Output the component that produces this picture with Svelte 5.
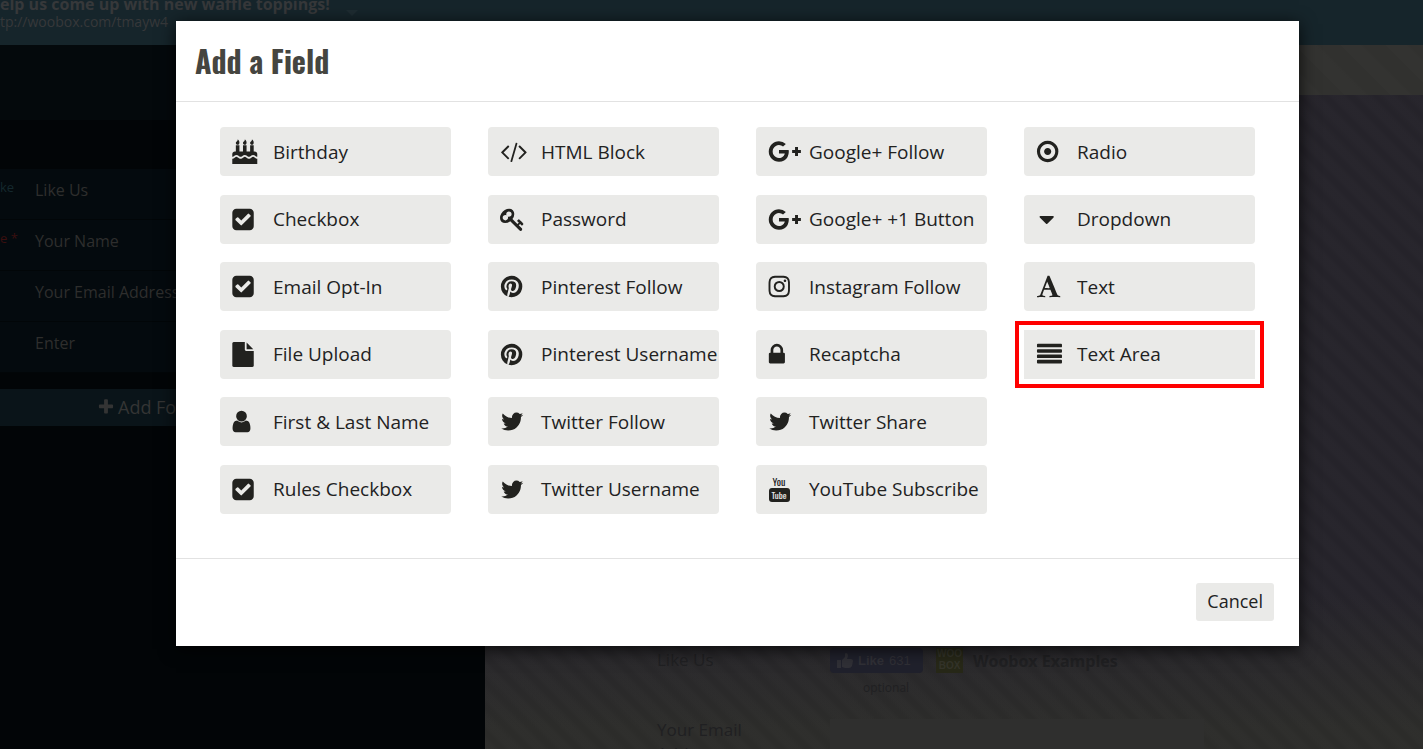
<script lang="ts">
	const icons: Record<string, { x: number; d: string }> = {
		cake: {
			x: -20,
			d: "M1792 1408v384h-1792v-384q45 0 85-14t59-27.5 47-37.5q30-27 51.5-38t56.5-11q24 0 44 7t31 15 33 27q29 25 47 38t58 27 86 14q45 0 85-14.5t58-27 48-37.5q21-19 32.5-27t31-15 43.5-7q35 0 56.5 11t51.5 38q28 24 47 37.5t59 27.5 85 14 85-14 59-27.5 47-37.5q30-27 51.5-38t56.5-11q34 0 55.5 11t51.5 38q28 24 47 37.5t59 27.5 85 14zm0-320v192q-24 0-44-7t-31-15-33-27q-29-25-47-38t-58-27-85-14q-46 0-86 14t-58 27-47 38q-22 19-33 27t-31 15-44 7q-35 0-56.5-11t-51.5-38q-29-25-47-38t-58-27-86-14q-45 0-85 14.5t-58 27-48 37.5q-21 19-32.5 27t-31 15-43.5 7q-35 0-56.5-11t-51.5-38q-28-24-47-37.5t-59-27.5-85-14q-46 0-86 14t-58 27-47 38q-22 19-33 27t-31 15-44 7v-192q0-80 56-136t136-56h64v-448h256v448h256v-448h256v448h256v-448h256v448h64q80 0 136 56t56 136zM512 256q0 77-36 118.5t-92 41.5q-53 0-90.5-37.5t-37.5-90.5q0-29 9.5-51t23.5-34 31-28 31-31.5 23.5-44.5 9.5-67q38 0 83 74t45 150zm512 0q0 77-36 118.5t-92 41.5q-53 0-90.5-37.5t-37.5-90.5q0-29 9.5-51t23.5-34 31-28 31-31.5 23.5-44.5 9.5-67q38 0 83 74t45 150zm512 0q0 77-36 118.5t-92 41.5q-53 0-90.5-37.5t-37.5-90.5q0-29 9.5-51t23.5-34 31-28 31-31.5 23.5-44.5 9.5-67q38 0 83 74t45 150z",
		},
		check: {
			x: 105,
			d: "M813 1299l614-614q19-19 19-45t-19-45l-102-102q-19-19-45-19t-45 19l-467 467-211-211q-19-19-45-19t-45 19l-102 102q-19 19-19 45t19 45l358 358q19 19 45 19t45-19zm851-883v960q0 119-84.5 203.5t-203.5 84.5h-960q-119 0-203.5-84.5t-84.5-203.5v-960q0-119 84.5-203.5t203.5-84.5h960q119 0 203.5 84.5t84.5 203.5z",
		},
		file: {
			x: 105,
			d: "M1152 512v-472q22 14 36 28l408 408q14 14 28 36h-472zm-128 32q0 40 28 68t68 28h544v1056q0 40-28 68t-68 28h-1344q-40 0-68-28t-28-68v-1600q0-40 28-68t68-28h800v544z",
		},
		user: {
			x: 215,
			d: "M1536 1399q0 109-62.5 187t-150.5 78h-854q-88 0-150.5-78t-62.5-187q0-85 8.5-160.5t31.5-152 58.5-131 94-89 134.5-34.5q131 128 313 128t313-128q76 0 134.5 34.5t94 89 58.5 131 31.5 152 8.5 160.5zm-256-887q0 159-112.5 271.5t-271.5 112.5-271.5-112.5-112.5-271.5 112.5-271.5 271.5-112.5 271.5 112.5 112.5 271.5z",
		},
		code: {
			x: -100,
			d: "M553 1399l-50 50q-10 10-23 10t-23-10l-466-466q-10-10-10-23t10-23l466-466q10-10 23-10t23 10l50 50q10 10 10 23t-10 23l-393 393 393 393q10 10 10 23t-10 23zm591-1067l-373 1291q-4 13-15.5 19.5t-23.5 2.5l-62-17q-13-4-19.5-15.5t-2.5-24.5l373-1291q4-13 15.5-19.5t23.5-2.5l62 17q13 4 19.5 15.5t2.5 24.5zm657 651l-466 466q-10 10-23 10t-23-10l-50-50q-10-10-10-23t10-23l393-393-393-393q-10-10-10-23t10-23l50-50q10-10 23-10t23 10l466 466q10 10 10 23t-10 23z",
		},
		key: {
			x: 0,
			d: "M832 512q0-80-56-136t-136-56-136 56-56 136q0 42 19 83-41-19-83-19-80 0-136 56t-56 136 56 136 136 56 136-56 56-136q0-42-19-83 41 19 83 19 80 0 136-56t56-136zm851 704q0 17-49 66t-66 49q-9 0-28.5-16t-36.5-33-38.5-40-24.5-26l-96 96 220 220q28 28 28 68 0 42-39 81t-81 39q-40 0-68-28l-671-671q-176 131-365 131-163 0-265.5-102.5t-102.5-265.5q0-160 95-313t248-248 313-95q163 0 265.5 102.5t102.5 265.5q0 189-131 365l355 355 96-96q-3-3-26-24.5t-40-38.5-33-36.5-16-28.5q0-17 49-66t66-49q13 0 23 10 6 6 46 44.5t82 79.5 86.5 86 73 78 28.5 41z",
		},
		pinterest: {
			x: 65,
			d: "M1664 896q0 209-103 385.5t-279.5 279.5-385.5 103q-111 0-218-32 59-93 78-164 9-34 54-211 20 39 73 67.5t114 28.5q121 0 216-68.5t147-188.5 52-270q0-114-59.5-214t-172.5-163-255-63q-105 0-196 29t-154.5 77-109 110.5-67 129.5-21.5 134q0 104 40 183t117 111q30 12 38-20 2-7 8-31t8-30q6-23-11-43-51-61-51-151 0-151 104.5-259.5t273.5-108.5q151 0 235.5 82t84.5 213q0 170-68.5 289t-175.5 119q-61 0-98-43.5t-23-104.5q8-35 26.5-93.5t30-103 11.5-75.5q0-50-27-83t-77-33q-62 0-105 57t-43 142q0 73 25 122l-99 418q-17 70-13 177-206-91-333-281t-127-423q0-209 103-385.5t279.5-279.5 385.5-103 385.5 103 279.5 279.5 103 385.5z",
		},
		twitter: {
			x: 20,
			d: "M1684 408q-67 98-162 167 1 14 1 42 0 130-38 259.5t-115.5 248.5-184.5 210.5-258 146-323 54.5q-271 0-496-145 35 4 78 4 225 0 401-138-105-2-188-64.5t-114-159.5q33 5 61 5 43 0 85-11-112-23-185.5-111.5t-73.5-205.5v-4q68 38 146 41-66-44-105-115t-39-154q0-88 44-163 121 149 294.5 238.5t371.5 99.5q-8-38-8-74 0-134 94.5-228.5t228.5-94.5q140 0 236 102 109-21 205-78-37 115-142 178 93-10 186-50z",
		},
		google: {
			x: -310,
			d: "M1181 913q0 208-87 370.5t-248 254-369 91.5q-149 0-285-58t-234-156-156-234-58-285 58-285 156-234 234-156 285-58q286 0 491 192l-199 191q-117-113-292-113-123 0-227.5 62t-165.5 168.5-61 232.5 61 232.5 165.5 168.5 227.5 62q83 0 152.5-23t114.5-57.5 78.5-78.5 49-83 21.5-74h-416v-252h692q12 63 12 122zm867-122v210h-209v209h-210v-209h-209v-210h209v-209h210v209h209z",
		},
		instagram: {
			x: 90,
			d: "M1152 896q0-106-75-181t-181-75-181 75-75 181 75 181 181 75 181-75 75-181zm138 0q0 164-115 279t-279 115-279-115-115-279 115-279 279-115 279 115 115 279zm108-410q0 38-27 65t-65 27-65-27-27-65 27-65 65-27 65 27 27 65zm-502-220q-7 0-76.5-.5t-105.5 0-96.5 3-103 10-71.5 18.5q-50 20-88 58t-58 88q-11 29-18.5 71.5t-10 103-3 96.5 0 105.5.5 76.5-.5 76.5 0 105.5 3 96.5 10 103 18.5 71.5q20 50 58 88t88 58q29 11 71.5 18.5t103 10 96.5 3 105.5 0 76.5-.5 76.5.5 105.5 0 96.5-3 103-10 71.5-18.5q50-20 88-58t58-88q11-29 18.5-71.5t10-103 3-96.5 0-105.5-.5-76.5.5-76.5 0-105.5-3-96.5-10-103-18.5-71.5q-20-50-58-88t-88-58q-29-11-71.5-18.5t-103-10-96.5-3-105.5 0-76.5.5zm768 630q0 229-5 317-10 208-124 322t-322 124q-88 5-317 5t-317-5q-208-10-322-124t-124-322q-5-88-5-317t5-317q10-208 124-322t322-124q88-5 317-5t317 5q208 10 322 124t124 322q5 88 5 317z",
		},
		lock: {
			x: 260,
			d: "M640 768h512v-192q0-106-75-181t-181-75-181 75-75 181v192zm832 96v576q0 40-28 68t-68 28h-960q-40 0-68-28t-28-68v-576q0-40 28-68t68-28h32v-192q0-184 132-316t316-132 316 132 132 316v192h32q40 0 68 28t28 68z",
		},
		radio: {
			x: 60,
			d: "M1152 896q0 106-75 181t-181 75-181-75-75-181 75-181 181-75 181 75 75 181zm-256-544q-148 0-273 73t-198 198-73 273 73 273 198 198 273 73 273-73 198-198 73-273-73-273-198-198-273-73zm768 544q0 209-103 385.5t-279.5 279.5-385.5 103-385.5-103-279.5-279.5-103-385.5 103-385.5 279.5-279.5 385.5-103 385.5 103 279.5 279.5 103 385.5z",
		},
		caret: {
			x: 130,
			d: "M1408 704q0 26-19 45l-448 448q-19 19-45 19t-45-19l-448-448q-19-19-19-45t19-45 45-19h896q26 0 45 19t19 45z",
		},
		font: {
			x: -10,
			d: "M789 559l-170 450q33 0 136.5 2t160.5 2q19 0 57-2-87-253-184-452zm-725 1105l2-79q23-7 56-12.5t57-10.5 49.5-14.5 44.5-29 31-50.5l237-616 280-724h128q8 14 11 21l205 480q33 78 106 257.5t114 274.5q15 34 58 144.5t72 168.5q20 45 35 57 19 15 88 29.5t84 20.5q6 38 6 57 0 5-.5 13.5t-.5 12.5q-63 0-190-8t-191-8q-76 0-215 7t-178 8q0-43 4-78l131-28q1 0 12.5-2.5t15.5-3.5 14.5-4.5 15-6.5 11-8 9-11 2.5-14q0-16-31-96.5t-72-177.5-42-100l-450-2q-26 58-76.5 195.5t-50.5 162.5q0 22 14 37.5t43.5 24.5 48.5 13.5 57 8.5 41 4q1 19 1 58 0 9-2 27-58 0-174.5-10t-174.5-10q-8 0-26.5 4t-21.5 4q-80 14-188 14z",
		},
		lines: {
			x: -70,
			d: "M64 1280h1664q64 0 64 64v128q0 64-64 64h-1664q-64 0-64-64v-128q0-64 64-64zm0-384h1664q64 0 64 64v128q0 64-64 64h-1664q-64 0-64-64v-128q0-64 64-64zm0-384h1664q64 0 64 64v128q0 64-64 64h-1664q-64 0-64-64v-128q0-64 64-64zm0-384h1664q64 0 64 64v128q0 64-64 64h-1664q-64 0-64-64v-128q0-64 64-64z",
		},
		plus: {
			x: 0,
			d: "M1600 736v192q0 40-28 68t-68 28h-416v416q0 40-28 68t-68 28h-192q-40 0-68-28t-28-68v-416h-416q-40 0-68-28t-28-68v-192q0-40 28-68t68-28h416v-416q0-40 28-68t68-28h192q40 0 68 28t28 68v416h416q40 0 68 28t28 68z",
		},
	};

	// listed column by column
	const columns = [
		[
			["cake", "Birthday"],
			["check", "Checkbox"],
			["check", "Email Opt-In"],
			["file", "File Upload"],
			["user", "First & Last Name"],
			["check", "Rules Checkbox"],
		],
		[
			["code", "HTML Block"],
			["key", "Password"],
			["pinterest", "Pinterest Follow"],
			["pinterest", "Pinterest Username"],
			["twitter", "Twitter Follow"],
			["twitter", "Twitter Username"],
		],
		[
			["google", "Google+ Follow"],
			["google", "Google+ +1 Button"],
			["instagram", "Instagram Follow"],
			["lock", "Recaptcha"],
			["twitter", "Twitter Share"],
			["youtube", "YouTube Subscribe"],
		],
		[
			["radio", "Radio"],
			["caret", "Dropdown"],
			["font", "Text"],
			["lines", "Text Area"],
		],
	];

	const rows = [
		{ tag: "ke", label: "Like Us" },
		{ tag: "e *", label: "Your Name", required: true },
		{ tag: "", label: "Your Email Address" },
		{ tag: "", label: "Enter" },
	];

	let open = $state(true);
	let selected = $state("Text Area");
</script>

{#snippet icon(name: string)}
	{#if name === "youtube"}
		<svg class="icon" viewBox="0 0 25 25" aria-hidden="true">
			<text x="11" y="9" class="you" fill="currentColor">You</text>
			<rect x="1" y="11" width="21" height="14" rx="3" fill="currentColor" />
			<text x="11" y="22" class="tube" fill="#eaeae8">Tube</text>
		</svg>
	{:else}
		<svg class="icon" viewBox="{icons[name].x} 0 1792 1792" aria-hidden="true">
			<path d={icons[name].d} fill="currentColor" />
		</svg>
	{/if}
{/snippet}

<div class="page">
	<header class="topbar">
		<div>
			<strong>elp us come up with new waffle toppings!</strong>
			<a href="#tmayw4">tp://woobox.com/tmayw4</a>
		</div>
		<span class="arrow"></span>
	</header>
	<div class="columns">
		<aside>
			<div class="tools"></div>
			<ul>
				{#each rows as row}
					<li>
						<span class="tag" class:required={row.required}>{row.tag}</span>
						<span>{row.label}</span>
					</li>
				{/each}
			</ul>
			<button class="add" type="button" onclick={() => (open = true)}>
				{@render icon("plus")}
				Add Form Field
			</button>
		</aside>
		<main>
			<div class="strip"></div>
			<div class="form">
				<div class="line">
					<span class="name">Like Us</span>
					<div class="social">
						<div class="like-line">
							<button class="like" type="button">
								<svg viewBox="0 0 16 16" aria-hidden="true">
									<path d="M0 7h4v8H0zM5 7l3-3V1q0-1 1-1 2 0 2 3l-1 3h4q2 0 2 2l-1 5q-1 2-3 2H8l-3-1z" fill="currentColor" />
								</svg>
								<b>Like</b> 631
							</button>
							<span class="logo">WOO<br />BOX</span>
							<strong>Woobox Examples</strong>
						</div>
						<small>optional</small>
					</div>
				</div>
				<div class="line">
					<label class="name" for="email">Your Email Address</label>
					<input id="email" type="email" />
				</div>
			</div>
		</main>
	</div>
</div>

{#if open}
	<div class="overlay">
		<div class="modal" role="dialog" aria-modal="true" aria-labelledby="title">
			<div class="modal-header">
				<h1 id="title">Add a Field</h1>
			</div>
			<div class="modal-body">
				{#each columns as column}
					<div class="column">
						{#each column as [glyph, label]}
							<button
								class="field"
								class:selected={selected === label}
								type="button"
								onclick={() => (selected = label)}
							>
								<span class="slot">{@render icon(glyph)}</span>
								{label}
							</button>
						{/each}
					</div>
				{/each}
			</div>
			<div class="modal-footer">
				<button class="cancel" type="button" onclick={() => (open = false)}>Cancel</button>
			</div>
		</div>
	</div>
{/if}

<style>
	:global(body) {
		margin: 0;
		background: #020507;
	}

	.page, .overlay {
		font-family: "Open Sans", "Noto Sans", sans-serif;
		box-sizing: border-box;
	}

	button {
		font-family: inherit;
		border: 0;
		cursor: pointer;
	}

	.icon {
		width: 25px;
		height: 25px;
		flex: none;
		overflow: visible;
	}

	.you, .tube {
		font: 10px Oswald, "Liberation Sans Narrow", sans-serif;
		text-anchor: middle;
	}

	.tube {
		font-size: 9px;
	}

	.page {
		height: 100vh;
		overflow: hidden;
		display: flex;
		flex-direction: column;
		color: #2e2e2d;
	}

	.topbar {
		flex: none;
		height: 45px;
		box-sizing: border-box;
		display: flex;
		gap: 16px;
		background: #16252b;
		overflow: hidden;
	}

	.topbar strong, .topbar a {
		display: block;
		white-space: nowrap;
		color: #36383a;
		text-decoration: none;
	}

	.topbar strong {
		font-size: 16px;
		line-height: 8px;
	}

	.topbar a {
		font-size: 14px;
		line-height: 28px;
	}

	.arrow {
		margin-top: 10px;
		width: 0;
		height: 0;
		border: 6px solid transparent;
		border-top-color: #1e2c32;
	}

	.columns {
		flex: 1;
		display: flex;
		min-height: 0;
	}

	aside {
		flex: none;
		width: 485px;
		background: #020507;
	}

	.tools {
		height: 75px;
		background: #04090c;
	}

	ul {
		list-style: none;
		margin: 49px 0 0;
		padding: 0;
		font-size: 16px;
		background: #040a0e;
	}

	li {
		display: flex;
		height: 51px;
		box-sizing: border-box;
		line-height: 42px;
		border-bottom: 1px solid #020608;
	}

	.tag {
		width: 35px;
		font-size: 13px;
		line-height: 36px;
		color: #14282d;
	}

	.tag.required {
		color: #3a0f0f;
	}

	.add {
		display: flex;
		align-items: center;
		gap: 3px;
		width: 100%;
		height: 37px;
		margin-top: 16px;
		padding: 0 0 2px 97px;
		font-size: 18px;
		color: #343434;
		background: #0a1419;
	}

	.add .icon {
		width: 18px;
		height: 18px;
	}

	main {
		flex: 1;
		display: flex;
		flex-direction: column;
		color: #202022;
		background:
			repeating-linear-gradient(45deg, rgba(255, 255, 255, 0.008) 0 6px, rgba(0, 0, 0, 0.03) 11px 13px, rgba(255, 255, 255, 0.008) 18px),
			linear-gradient(#26242b 78%, #2d2d2b 97%);
	}

	.strip {
		flex: none;
		height: 50px;
		background: repeating-linear-gradient(45deg, #333331 0 14px, #31312f 17px 32px);
	}

	.form {
		flex: 1;
		padding: 545px 219px 0 172px;
		overflow: hidden;
	}

	.line {
		display: flex;
		height: 70px;
	}

	.name {
		width: 173px;
		flex: none;
		box-sizing: border-box;
		padding: 8px 48px 0 0;
		font-size: 17px;
		line-height: 24px;
	}

	.social small {
		display: block;
		padding-left: 33px;
		font-size: 12px;
		line-height: 30px;
	}

	.like-line {
		display: flex;
		align-items: center;
		height: 25px;
		padding-top: 8px;
		font-size: 16px;
	}

	.like-line strong {
		padding-left: 10px;
	}

	.like {
		display: flex;
		align-items: center;
		gap: 5px;
		width: 93px;
		height: 25px;
		padding: 0 7px;
		border-radius: 4px;
		font: 13px "Liberation Sans", sans-serif;
		color: #303036;
		background: #20212c;
		white-space: nowrap;
	}

	.like svg {
		width: 16px;
		height: 16px;
	}

	.logo {
		margin-left: 13px;
		width: 27px;
		height: 25px;
		font: bold 10px/12px "Liberation Sans", sans-serif;
		text-align: center;
		color: #34342a;
		background: #272818;
	}

	input {
		flex: 1;
		height: 42px;
		margin-top: 9px;
		border: 0;
		background: #2f2f2e;
	}

	.overlay {
		position: absolute;
		inset: 0;
		padding: 21px 124px 0 176px;
	}

	.modal {
		background: #fff;
		color: #22221f;
		box-shadow: 0 3px 16px rgba(0, 0, 0, 0.8);
	}

	.modal-header {
		padding: 20px 19px;
		border-bottom: 1px solid #e2e2e2;
	}

	h1 {
		margin: 0;
		font: bold 30px/40px Oswald, "Liberation Sans Narrow", "Liberation Sans", sans-serif;
		color: #454540;
	}

	.modal-body {
		display: grid;
		grid-template-columns: repeat(4, 1fr);
		column-gap: 37px;
		padding: 25px 44px 44px;
		min-height: 387px;
	}

	.column {
		display: grid;
		grid-template-rows: repeat(6, 49px);
		align-content: space-between;
	}

	.field {
		display: flex;
		align-items: center;
		min-width: 0;
		padding: 0 0 0 12px;
		border-radius: 4px;
		font-size: 19px;
		white-space: nowrap;
		color: #22221f;
		background: #eaeae8;
	}

	.field.selected {
		outline: 4px solid #f00;
		outline-offset: 5px;
		border-radius: 0;
	}

	.slot {
		display: flex;
		width: 41px;
		flex: none;
	}

	.modal-footer {
		display: flex;
		justify-content: flex-end;
		padding: 24px 25px 25px;
		border-top: 1px solid #e2e2e2;
	}

	.cancel {
		height: 38px;
		padding: 0 11px 2px;
		border-radius: 3px;
		font-size: 18px;
		color: #22221f;
		background: #eaeae8;
	}
</style>
